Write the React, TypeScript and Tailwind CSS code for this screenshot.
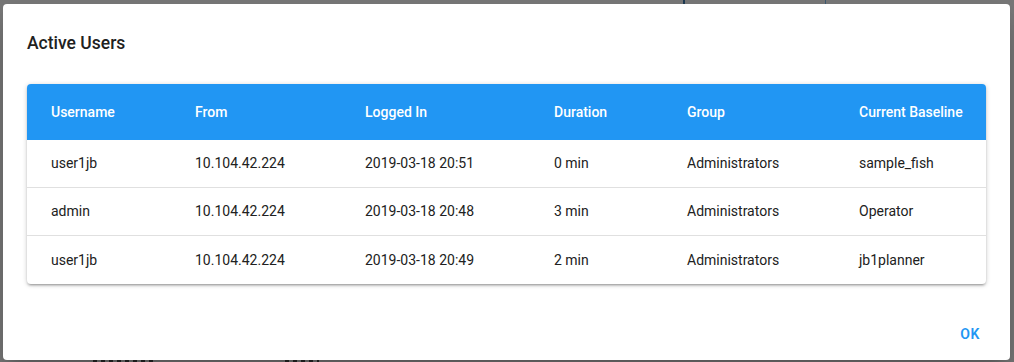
import React from "react";

/**
 * Active users dialog, open over a dimmed page.
 *
 * Columns are fixed widths so header and body cells line up without a <table>
 * fighting over auto layout.
 */

interface Session {
  username: string;
  from: string;
  loggedIn: string;
  duration: string;
  group: string;
  baseline: string;
}

const SESSIONS: Session[] = [
  {
    username: "user1jb",
    from: "10.104.42.224",
    loggedIn: "2019-03-18 20:51",
    duration: "0 min",
    group: "Administrators",
    baseline: "sample_fish",
  },
  {
    username: "admin",
    from: "10.104.42.224",
    loggedIn: "2019-03-18 20:48",
    duration: "3 min",
    group: "Administrators",
    baseline: "Operator",
  },
  {
    username: "user1jb",
    from: "10.104.42.224",
    loggedIn: "2019-03-18 20:49",
    duration: "2 min",
    group: "Administrators",
    baseline: "jb1planner",
  },
];

const COLS = [
  "w-[144px]",
  "w-[170px]",
  "w-[189px]",
  "w-[133px]",
  "w-[172px]",
  "flex-1",
];

const HEADERS = [
  "Username",
  "From",
  "Logged In",
  "Duration",
  "Group",
  "Current Baseline",
];

export default function App() {
  return (
    <div
      className="flex h-[362px] w-[1014px] flex-col overflow-hidden bg-[#777777]"
      style={{ fontFamily: "Roboto, 'Noto Sans', sans-serif" }}
    >
      {/* Page behind the backdrop: only slivers peek out above and below. */}
      <div className="flex h-[4px] shrink-0 pl-[683px]">
        <div className="h-full w-[2px] bg-[#1e3a52]" />
        <div className="ml-[140px] h-full w-[1px] bg-[#3d5a70]" />
      </div>

      <div className="flex h-[356px] shrink-0 pl-[3px]">
        <div className="flex w-[1007px] flex-col rounded bg-white shadow-[0_11px_15px_-7px_rgba(0,0,0,0.2),0_24px_38px_3px_rgba(0,0,0,0.14)]">
          <h2 className="px-6 pb-[29px] pt-[27px] text-[17.5px] font-medium leading-6 text-[#212121]">
            Active Users
          </h2>

          <div className="px-6">
            <div className="overflow-hidden rounded bg-white shadow-[0_1px_5px_0_rgba(0,0,0,0.2),0_2px_2px_0_rgba(0,0,0,0.14),0_3px_1px_-2px_rgba(0,0,0,0.12)]">
              <div className="flex h-[56px] items-center bg-[#2196f3] text-[14px] font-medium text-white">
                {HEADERS.map((h, i) => (
                  <div key={h} className={`${COLS[i]} pl-6`}>
                    {h}
                  </div>
                ))}
              </div>
              {SESSIONS.map((s, r) => (
                <div
                  key={r}
                  className={`flex h-[48px] items-center text-[14px] text-[#212121] ${
                    r < SESSIONS.length - 1 ? "border-b border-[#e0e0e0]" : ""
                  }`}
                >
                  {[s.username, s.from, s.loggedIn, s.duration, s.group, s.baseline].map(
                    (v, i) => (
                      <div key={i} className={`${COLS[i]} pl-6`}>
                        {v}
                      </div>
                    ),
                  )}
                </div>
              ))}
            </div>
          </div>

          <div className="mt-auto flex justify-end p-2">
            <button
              type="button"
              className="h-9 min-w-16 rounded px-2 text-[14px] font-semibold uppercase tracking-[0.4px] text-[#2196f3]"
            >
              OK
            </button>
          </div>
        </div>
      </div>

      <div className="flex h-[2px] shrink-0 gap-[130px] pl-[93px]">
        <div className="h-full w-[62px] bg-[repeating-linear-gradient(90deg,#1c1c1c_0_4px,transparent_4px_8px)]" />
        <div className="h-full w-[34px] bg-[repeating-linear-gradient(90deg,#1c1c1c_0_4px,transparent_4px_8px)]" />
      </div>
    </div>
  );
}
